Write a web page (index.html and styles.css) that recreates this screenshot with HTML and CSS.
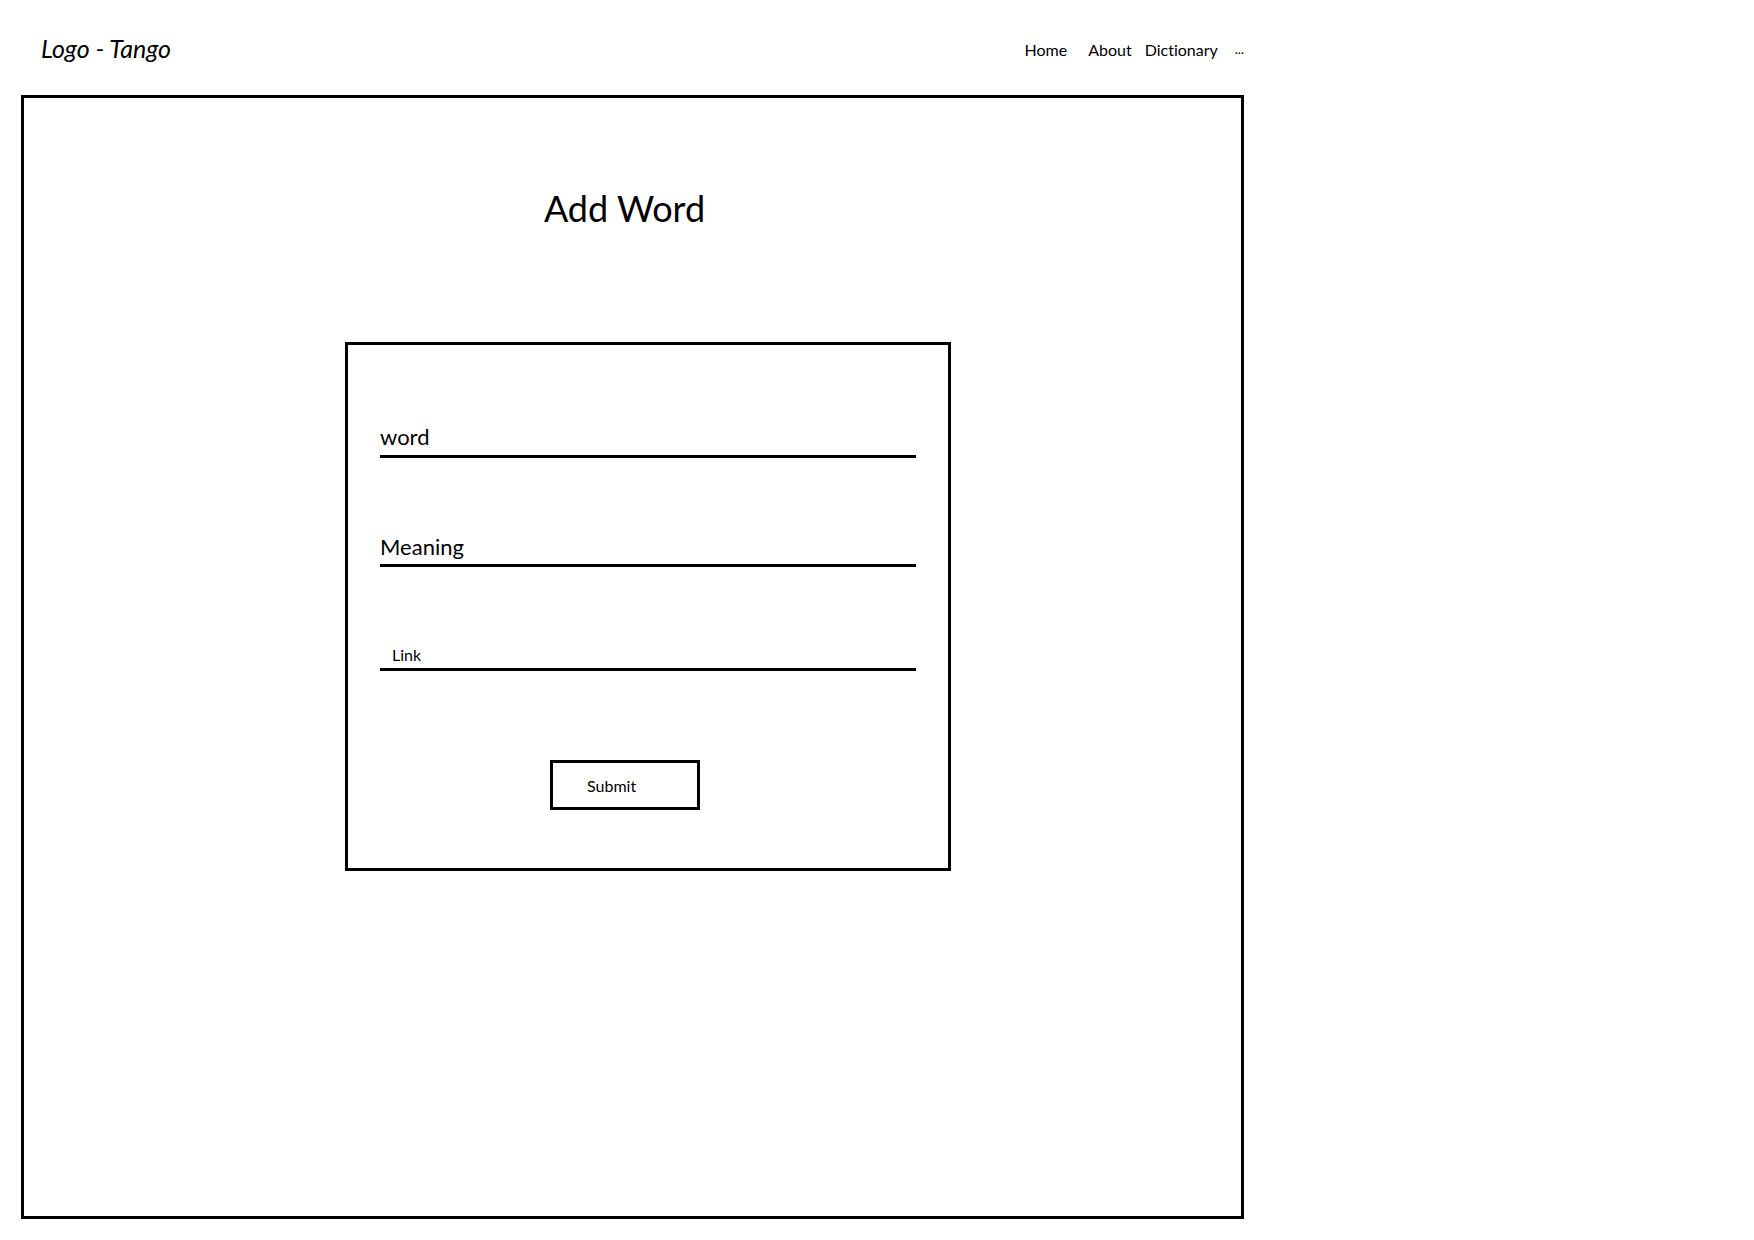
FILE: index.html
```html
<!DOCTYPE html>
<html lang="en">
<head>
<meta charset="utf-8">
<title>Add Word - Tango</title>
<link rel="stylesheet" href="styles.css">
</head>
<body>
<div class="page">
  <header class="header">
    <div class="logo">Logo - Tango</div>
    <nav class="nav">
      <a class="nav-item nav-home">Home</a>
      <a class="nav-item nav-about">About</a>
      <a class="nav-item nav-dict">Dictionary</a>
      <a class="nav-item nav-more">...</a>
    </nav>
  </header>
  <main class="frame">
    <h1 class="title">Add Word</h1>
    <form class="card">
      <div class="field field-word">word</div>
      <div class="field field-meaning">Meaning</div>
      <div class="field field-link"><span class="link-label">Link</span></div>
      <div class="button">Submit</div>
    </form>
  </main>
</div>
</body>
</html>
```
FILE: styles.css
```css
html, body {
  margin: 0;
  padding: 0;
  background: #fff;
}
body {
  font-family: Lato, "Open Sans", sans-serif;
  color: #000;
  font-variant-ligatures: none;
}
.page {
  width: 1223px;
  margin-left: 21px;
}
.header {
  height: 95px;
  box-sizing: border-box;
  padding-top: 33px;
  padding-left: 20px;
  display: flex;
  align-items: flex-start;
}
.logo {
  font-style: italic;
  font-size: 25px;
  line-height: 1.2;
}
.nav {
  margin-left: auto;
  margin-top: 7px;
  display: flex;
  font-size: 16px;
  line-height: 1.2;
  padding-right: 0;
}
.nav-item {
  color: #000;
  text-decoration: none;
}
.nav-home { margin-right: 21px; }
.nav-about { margin-right: 13px; }
.nav-dict { margin-right: 17px; }
.nav-more { font-size: 13px; line-height: 19px; }
.frame {
  box-sizing: border-box;
  height: 1124px;
  border: 3px solid #000;
  padding-top: 89px;
}
.title {
  margin: 0;
  font-weight: 400;
  font-size: 36px;
  line-height: 1.2;
  text-align: center;
  padding-right: 16px;
}
.card {
  box-sizing: border-box;
  width: 606px;
  height: 529px;
  margin: 112px 0 0 321px;
  border: 3px solid #000;
  padding: 79px 32px 0 32px;
  display: flex;
  flex-direction: column;
  align-items: flex-start;
}
.field {
  align-self: stretch;
  border-bottom: 3px solid #000;
  padding-bottom: 4px;
  font-size: 22px;
  line-height: 1.2;
}
.field-meaning {
  margin-top: 76px;
}
.field-link {
  margin-top: 78px;
  font-size: 16px;
  padding-left: 12px;
}
.button {
  box-sizing: border-box;
  margin-top: 89px;
  margin-left: 170px;
  width: 150px;
  height: 50px;
  border: 3px solid #000;
  padding-left: 34px;
  display: flex;
  align-items: center;
  font-size: 16px;
}
```
